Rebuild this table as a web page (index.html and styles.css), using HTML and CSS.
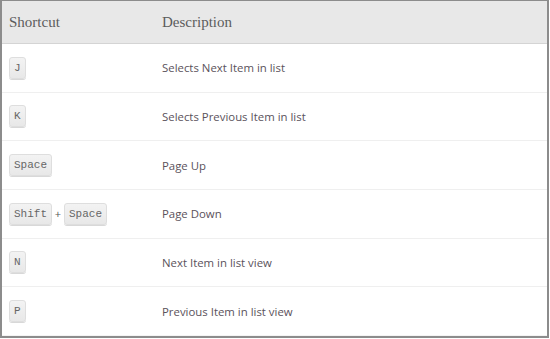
FILE: index.html
```html
<!DOCTYPE html>
<html lang="en">
<head>
    <meta charset="UTF-8">
    <title>Keyboard Shortcuts</title>
    <link rel="stylesheet" href="styles.css">
</head>
<body>
    <div class="shortcuts">
        <div class="row head">
            <div class="key-col">Shortcut</div>
            <div class="desc-col">Description</div>
        </div>
        <div class="row">
            <div class="key-col"><kbd>J</kbd></div>
            <div class="desc-col">Selects Next Item in list</div>
        </div>
        <div class="row">
            <div class="key-col"><kbd>K</kbd></div>
            <div class="desc-col">Selects Previous Item in list</div>
        </div>
        <div class="row">
            <div class="key-col"><kbd>Space</kbd></div>
            <div class="desc-col">Page Up</div>
        </div>
        <div class="row">
            <div class="key-col"><kbd>Shift</kbd><span class="plus">+</span><kbd>Space</kbd></div>
            <div class="desc-col">Page Down</div>
        </div>
        <div class="row">
            <div class="key-col"><kbd>N</kbd></div>
            <div class="desc-col">Next Item in list view</div>
        </div>
        <div class="row">
            <div class="key-col"><kbd>P</kbd></div>
            <div class="desc-col">Previous Item in list view</div>
        </div>
    </div>
</body>
</html>
```

FILE: styles.css
```css
* {
    box-sizing: border-box;
    margin: 0;
    padding: 0;
}
body {
    background: #fff;
    font-family: 'Open Sans', sans-serif;
}
.shortcuts {
    width: 549px;
    height: 338px;
    border: 2px solid #8c8c8c;
    border-top-width: 1px;
    display: grid;
    grid-template-rows: 43px repeat(6, 1fr);
}
.row {
    display: flex;
    align-items: center;
    border-bottom: 1px solid #efefef;
    color: #5a525b;
    font-size: 11.4px;
}
.row:last-child {
    border-bottom-color: #f4f4f4;
}
.head {
    background: #e8e8e8;
    border-bottom: 1px solid #d4d4d4;
    font-family: 'Liberation Serif', serif;
    font-size: 15px;
    color: #5c5c5c;
}
.key-col {
    width: 153px;
    padding-left: 7px;
    display: flex;
    align-items: center;
}
.desc-col {
    padding-left: 7px;
}
kbd {
    display: inline-block;
    height: 22px;
    line-height: 20px;
    padding: 0 4px;
    font-family: 'Liberation Mono', monospace;
    font-size: 11px;
    color: #666;
    background: linear-gradient(#f3f3f3, #e8e8e8);
    border: 1px solid #dedede;
    border-radius: 3px;
    box-shadow: 0 1px 0 #d8d8d8;
}
.plus {
    width: 12px;
    text-align: center;
    font-size: 11px;
    color: #555;
}
```
